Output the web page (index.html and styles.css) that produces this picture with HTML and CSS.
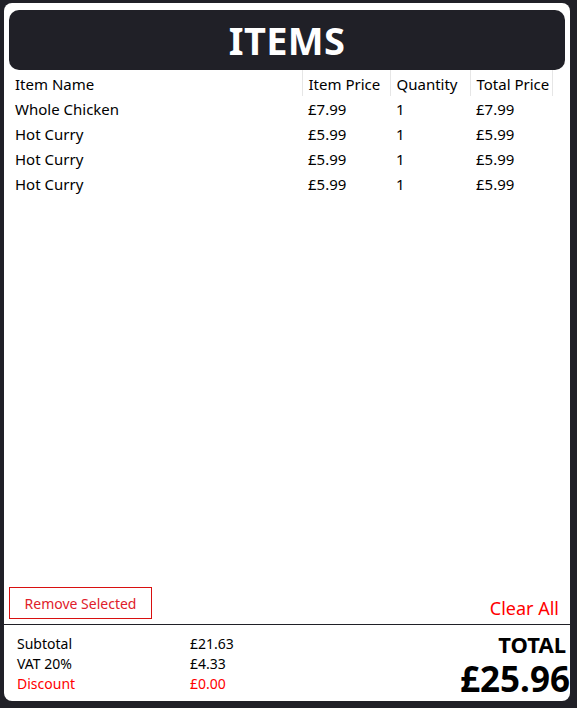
FILE: index.html
```html
<!DOCTYPE html>
<html>
<head>
<meta charset="utf-8">
<link rel="stylesheet" href="styles.css">
</head>
<body>
<div class="card">
  <div class="header"><h1 class="title">ITEMS</h1></div>
  <div class="list">
    <table class="items">
      <thead>
        <tr><th class="c-name">Item Name</th><th class="c-price">Item Price</th><th class="c-qty">Quantity</th><th class="c-total">Total Price</th></tr>
      </thead>
      <tbody>
        <tr><td>Whole Chicken</td><td>£7.99</td><td>1</td><td>£7.99</td></tr>
        <tr><td>Hot Curry</td><td>£5.99</td><td>1</td><td>£5.99</td></tr>
        <tr><td>Hot Curry</td><td>£5.99</td><td>1</td><td>£5.99</td></tr>
        <tr><td>Hot Curry</td><td>£5.99</td><td>1</td><td>£5.99</td></tr>
      </tbody>
    </table>
  </div>
  <div class="actions">
    <button class="remove">Remove Selected</button>
    <button class="clear">Clear All</button>
  </div>
  <div class="summary">
    <div class="lines">
      <div class="line"><span class="label">Subtotal</span><span class="val">£21.63</span></div>
      <div class="line"><span class="label">VAT 20%</span><span class="val">£4.33</span></div>
      <div class="line red"><span class="label">Discount</span><span class="val">£0.00</span></div>
    </div>
    <div class="total">
      <div class="total-label">TOTAL</div>
      <div class="total-amount">£25.96</div>
    </div>
  </div>
</div>
</body>
</html>
```
FILE: styles.css
```css
* { box-sizing: border-box; }
html, body { margin: 0; padding: 0; }
body {
  background: #202027;
  width: 577px;
  height: 708px;
  font-family: "Noto Sans", "Open Sans", sans-serif;
  color: #000;
  padding: 3px 7px 7px 4px;
}
.card {
  background: #fff;
  border-radius: 8px;
  height: 698px;
  display: flex;
  flex-direction: column;
  padding-top: 7px;
}
.header {
  margin: 0 5px 0 5px;
  background: #202027;
  border-radius: 10px;
  height: 60px;
  display: flex;
  align-items: center;
  justify-content: center;
}
.title {
  margin: 0;
  color: #fff;
  font-size: 38px;
  font-weight: 700;
  letter-spacing: 0.3px;
  line-height: 58px;
}
.list {
  flex: 1;
  padding: 0 0 0 5px;
}
.items {
  border-collapse: collapse;
  table-layout: fixed;
  font-size: 15px;
  width: 544px;
  white-space: nowrap;
}
.items th {
  font-weight: 400;
  text-align: left;
  height: 26px;
  padding: 1px 6px 0 6px;
  border-left: 1px solid #e6e6e6;
  border-right: 1px solid #e6e6e6;
}
.items th.c-name { border-left: none; width: 293px; }
.items th.c-price { width: 88px; }
.items th.c-qty { width: 80px; }
.items td {
  height: 25px;
  padding: 0 6px;
}
.actions {
  display: flex;
  justify-content: space-between;
  align-items: flex-end;
  padding: 0 11px 5px 5px;
}
button {
  font-family: inherit;
  background: none;
  cursor: pointer;
}
.remove {
  color: #e0202a;
  border: 1px solid #d81010;
  height: 32px;
  width: 143px;
  font-size: 14px;
  font-weight: 400;
  padding: 0;
}
.clear {
  color: #f00;
  border: none;
  font-size: 18px;
  padding: 0;
  line-height: 22px;
}
.summary {
  border-top: 1px solid #202027;
  display: flex;
  justify-content: space-between;
  height: 77px;
  padding: 8px 0 0 13px;
}
.lines { font-size: 14px; line-height: 20px; padding-top: 1px; }
.line { display: flex; }
.label { width: 173px; }
.red { color: #f00; }
.total { text-align: right; font-weight: 700; }
.total-label { font-size: 22px; line-height: 22px; padding-right: 4px; }
.total-amount { font-size: 35px; line-height: 38px; margin-top: 5px; }
```
